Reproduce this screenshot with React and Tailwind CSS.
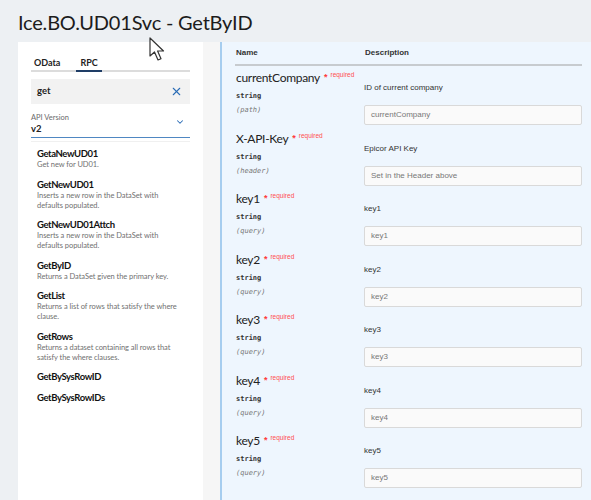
import React from 'react';
import { X, ChevronDown } from 'lucide-react';

const methods = [
  { name: 'GetaNewUD01', desc: ['Get new for UD01.'] },
  { name: 'GetNewUD01', desc: ['Inserts a new row in the DataSet with', 'defaults populated.'] },
  { name: 'GetNewUD01Attch', desc: ['Inserts a new row in the DataSet with', 'defaults populated.'] },
  { name: 'GetByID', desc: ['Returns a DataSet given the primary key.'] },
  { name: 'GetList', desc: ['Returns a list of rows that satisfy the where', 'clause.'] },
  { name: 'GetRows', desc: ['Returns a dataset containing all rows that', 'satisfy the where clauses.'] },
  { name: 'GetBySysRowID', desc: [] },
  { name: 'GetBySysRowIDs', desc: [] },
];

const params = [
  { name: 'currentCompany', where: 'path', desc: 'ID of current company', ph: 'currentCompany' },
  { name: 'X-API-Key', where: 'header', desc: 'Epicor API Key', ph: 'Set in the Header above' },
  { name: 'key1', where: 'query', desc: 'key1', ph: 'key1' },
  { name: 'key2', where: 'query', desc: 'key2', ph: 'key2' },
  { name: 'key3', where: 'query', desc: 'key3', ph: 'key3' },
  { name: 'key4', where: 'query', desc: 'key4', ph: 'key4' },
  { name: 'key5', where: 'query', desc: 'key5', ph: 'key5' },
];

const lato = { fontFamily: 'Lato, "Noto Sans", sans-serif' };
const arial = { fontFamily: '"Liberation Sans", Arial, sans-serif' };
const mono = { fontFamily: '"DejaVu Sans Mono", "Liberation Mono", monospace' };

const Cursor = () => (
  <svg className="absolute left-[149px] top-[37px]" width="18" height="26" viewBox="0 0 18 26">
    <path d="M1 1 L1 19 L5.5 15 L9 23 L12 21.7 L8.6 14 L14.5 14 Z" fill="#fff" stroke="#333" strokeWidth="1.2" strokeLinejoin="round" />
  </svg>
);

const App = () => {
  return (
    <div className="relative w-[591px] h-[500px] overflow-hidden bg-[#edf0f3] flex flex-col">
      <h1 className="text-[20px] leading-[28px] tracking-[-0.2px] text-[#1c1c1c] pl-[18px] pt-[8px] h-[42px]" style={lato}>
        Ice.BO.UD01Svc - GetByID
      </h1>
      <Cursor />

      <div className="flex flex-1 ml-[18px]">
        {/* Sidebar */}
        <div className="w-[185px] bg-white pl-[13px] pr-[13px] pt-[14px]" style={lato}>
          <div className="flex gap-[16px] border-b-2 border-[#dcdcdc] pl-[3px] h-[16px] text-[9px] font-bold text-[#222]">
            <span className="leading-[13px]">OData</span>
            <span className="leading-[13px] border-b-2 border-[#1f3d66] px-[4px] -mb-[2px]">RPC</span>
          </div>
          <div className="mt-[7px] h-[25px] bg-[#f2f2f2] flex items-center justify-between pl-[6px] pr-[7px]">
            <span className="text-[9.5px] font-bold text-[#222]">get</span>
            <X size={13} strokeWidth={2} className="text-[#2b6cb6]" />
          </div>
          <div className="mt-[8px] border-b border-[#4f87c2] flex items-end justify-between pb-[2px]">
            <div className="flex flex-col">
              <span className="text-[7.5px] leading-[11px] text-[#6b6b6b]">API Version</span>
              <span className="text-[9.5px] leading-[12px] font-bold text-[#222]">v2</span>
            </div>
            <ChevronDown size={10} strokeWidth={2.5} className="text-[#2b6cb6] mb-[8px] mr-[5px]" />
          </div>
          <div className="border-b border-[#f0f0f0] h-[4px]" />
          <div className="flex flex-col pl-[6px] pt-[6px] gap-[8.5px]">
            {methods.map((m) => (
              <div key={m.name} className="flex flex-col">
                <span className="text-[9.5px] leading-[12px] tracking-[-0.4px] font-bold text-[#111]">{m.name}</span>
                {m.desc.map((d) => (
                  <span key={d} className="text-[7.5px] leading-[10px] tracking-[-0.05px] text-[#707070] whitespace-nowrap">{d}</span>
                ))}
              </div>
            ))}
          </div>
        </div>

        <div className="w-[17px] bg-[#f6f6f6]" />
        <div className="w-[2px] bg-[#a6cdef]" />

        {/* Parameters */}
        <div className="flex-1 bg-[#eef6fe] pl-[13px] pr-[9px]" style={arial}>
          <div className="flex h-[24px] items-center border-b-2 border-[#c7cbcf] text-[8px] font-bold text-[#333] pl-[1px]">
            <span className="w-[129px]">Name</span>
            <span>Description</span>
          </div>
          <div className="flex flex-col pt-[4px]">
            {params.map((p) => (
              <div key={p.name} className="flex h-[60.5px]">
                <div className="w-[129px] pl-[1px] flex flex-col">
                  <div className="flex items-start h-[16px]">
                    <span className="text-[12px] leading-[16px] tracking-[-0.3px] text-[#222]" style={lato}>{p.name}</span>
                    <span className="text-[#ff3b3b] text-[9px] leading-[12px] ml-[4px] mt-[1px] font-bold">*</span>
                    <span className="text-[#ff4d4d] text-[6.5px] leading-[8px] ml-[3px] mt-[1px]">required</span>
                  </div>
                  <span className="text-[7px] leading-[12px] font-bold text-[#333] mt-[4px]" style={mono}>string</span>
                  <span className="text-[7px] leading-[12px] italic text-[#777] mt-[2px]" style={mono}>({p.where})</span>
                </div>
                <div className="flex-1 flex flex-col">
                  <span className="text-[8px] leading-[10px] text-[#333] mt-[13px]">{p.desc}</span>
                  <div className="mt-[12px] h-[20px] bg-[#fafafa] border border-[#d9d9d9] rounded-[2px] flex items-center pl-[6px] text-[8px] text-[#777]">
                    {p.ph}
                  </div>
                </div>
              </div>
            ))}
          </div>
        </div>
      </div>
    </div>
  );
};

export default App;
